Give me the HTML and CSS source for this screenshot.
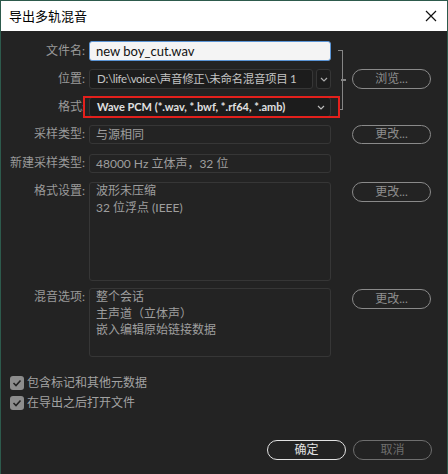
FILE: index.html
```html
<!DOCTYPE html>
<html lang="zh">
<head>
<meta charset="utf-8">
<link rel="stylesheet" href="styles.css">
</head>
<body>
<div class="window">
  <div class="titlebar">
    <span class="title">导出多轨混音</span>
    <svg class="close" width="12" height="12" viewBox="0 0 12 12"><path d="M1 1L11 11M11 1L1 11" stroke="#111" stroke-width="1.2" fill="none"/></svg>
  </div>
  <div class="content">
    <div class="group">
      <div class="row r1">
        <div class="label">文件名:</div>
        <div class="field input">new boy_cut.wav</div>
      </div>
      <div class="row r2">
        <div class="label">位置:</div>
        <div class="locwrap">
          <div class="field loc">D:\life\voice\声音修正\未命名混音项目 1</div>
          <div class="field arrowbox"><svg width="8" height="5" viewBox="0 0 8 5"><path d="M1 1L4 4L7 1" stroke="#aaa" stroke-width="1.2" fill="none"/></svg></div>
        </div>
        <div class="btn browse">浏览...</div>
      </div>
      <div class="row r3">
        <div class="label">格式:</div>
        <div class="field select">Wave PCM (*.wav, *.bwf, *.rf64, *.amb)<svg width="8" height="5" viewBox="0 0 8 5"><path d="M1 1L4 4L7 1" stroke="#bbb" stroke-width="1.2" fill="none"/></svg></div>
      </div>
      <div class="bracket"><span class="tick"></span></div>
      <div class="redbox"></div>
    </div>
    <div class="row r4">
      <div class="label">采样类型:</div>
      <div class="field plain">与源相同</div>
      <div class="btn">更改...</div>
    </div>
    <div class="row r5">
      <div class="label">新建采样类型:</div>
      <div class="field plain">48000 Hz 立体声，32 位</div>
    </div>
    <div class="row r6">
      <div class="label">格式设置:</div>
      <div class="field box b6">波形未压缩<br>32 位浮点 (IEEE)</div>
      <div class="btn">更改...</div>
    </div>
    <div class="row r7">
      <div class="label">混音选项:</div>
      <div class="field box b7">整个会话<br>主声道（立体声）<br>嵌入编辑原始链接数据</div>
      <div class="btn">更改...</div>
    </div>
    <div class="checks">
      <label class="check"><span class="cb"><svg width="10" height="8" viewBox="0 0 10 8"><path d="M1.5 4L4 6.5L8.5 1.5" stroke="#222" stroke-width="1.6" fill="none"/></svg></span>包含标记和其他元数据</label>
      <label class="check"><span class="cb"><svg width="10" height="8" viewBox="0 0 10 8"><path d="M1.5 4L4 6.5L8.5 1.5" stroke="#222" stroke-width="1.6" fill="none"/></svg></span>在导出之后打开文件</label>
    </div>
    <div class="actions">
      <div class="btn ok">确定</div>
      <div class="btn cancel">取消</div>
    </div>
  </div>
</div>
</body>
</html>
```
FILE: styles.css
```css
* { box-sizing: border-box; }
html, body { margin: 0; padding: 0; }
body {
  width: 448px;
  height: 474px;
  background: #232323;
  font-family: "Lato", "Noto Sans CJK SC", sans-serif;
  font-size: 12px;
  overflow: hidden;
}
.window {
  width: 448px;
  height: 474px;
  border: 1px solid #2d5a4c;
  border-bottom: none;
  background: #232323;
}
.titlebar {
  height: 30px;
  background: #fff;
  display: flex;
  align-items: center;
  justify-content: space-between;
  padding: 0 9px 0 8px;
}
.title {
  font-family: "Noto Sans CJK SC", sans-serif;
  font-size: 13px;
  color: #000;
  line-height: 1;
  margin-top: -1px;
}
.close { margin-right: 1px; margin-top: -1px; }
.content { padding-top: 10px; }
.group { position: relative; }
.row {
  display: flex;
  align-items: flex-start;
}
.label {
  width: 84px;
  text-align: right;
  color: #9a9a9a;
  line-height: 20px;
  white-space: nowrap;
  flex: none;
}
.field {
  margin-left: 4px;
  width: 242px;
  height: 20px;
  line-height: 18px;
  border: 1px solid #363636;
  border-radius: 3px;
  padding: 0 6px;
  color: #9e9e9e;
  white-space: nowrap;
  overflow: hidden;
  flex: none;
}
.input {
  background: #f4f4f4;
  border-color: #5b95d6;
  color: #111;
  font-size: 13px;
}
.r2 { margin-top: 8px; }
.locwrap { display: flex; margin-left: 4px; width: 242px; flex: none; }
.loc {
  margin-left: 0;
  width: 224px;
  background: #1c1c1c;
  color: #c4c4c4;
  padding-left: 7px;
  padding-right: 2px;
  font-size: 11.5px;
  letter-spacing: -0.35px;
}
.arrowbox {
  margin-left: 3px;
  width: 15px;
  padding: 0;
  background: #1c1c1c;
  display: flex;
  align-items: center;
  justify-content: center;
}
.r3 { margin-top: 8px; }
.select {
  background: #1c1c1c;
  color: #e0e0e0;
  display: flex;
  justify-content: space-between;
  align-items: center;
  padding-left: 7px;
  padding-right: 5px;
  font-size: 11px;
  font-weight: 700;
}
.btn {
  margin-left: 21px;
  width: 79px;
  height: 20px;
  border: 1.5px solid #8a8a8a;
  border-radius: 10px;
  color: #8e8e8e;
  text-align: center;
  line-height: 17px;
  flex: none;
}
.bracket {
  position: absolute;
  left: 337px;
  top: 9px;
  width: 5px;
  height: 60px;
  border: 1.5px solid #858585;
  border-left: none;
}
.bracket .tick {
  position: absolute;
  left: 3px;
  top: 28px;
  width: 5px;
  height: 1.5px;
  background: #858585;
}
.redbox {
  position: absolute;
  left: 82px;
  top: 55px;
  width: 257px;
  height: 22px;
  border: 2px solid #e3201c;
}
.r4 { margin-top: 8px; }
.r4 .field, .r5 .field { height: 19px; line-height: 17px; }
.r4 .label, .r5 .label { line-height: 18px; }
.r4 .btn { height: 19px; line-height: 16px; }
.r5 { margin-top: 10px; }
.r6 { margin-top: 9px; }
.box {
  line-height: 16.5px;
  padding-top: 0;
  white-space: normal;
}
.b6 { height: 99px; }
.b7 { height: 69px; }
.r6 .label, .r7 .label { line-height: 18px; }
.r7 { margin-top: 7px; }
.r7 .btn { margin-top: 1px; }
.checks {
  margin-top: 18px;
  padding-left: 9px;
  display: flex;
  flex-direction: column;
  gap: 5px;
}
.check {
  display: flex;
  align-items: center;
  color: #a2a2a2;
  line-height: 15px;
}
.cb {
  width: 14px;
  height: 14px;
  border-radius: 3px;
  background: #8d8d8d;
  display: flex;
  align-items: center;
  justify-content: center;
  margin-right: 3px;
}
.actions {
  margin-top: 30px;
  display: flex;
  padding-left: 266px;
}
.actions .btn { margin-left: 0; }
.ok {
  border-color: #e2e2e2;
  color: #e2e2e2;
}
.cancel {
  margin-left: 7px !important;
  border-color: #6e6e6e;
  color: #6e6e6e;
}
```
